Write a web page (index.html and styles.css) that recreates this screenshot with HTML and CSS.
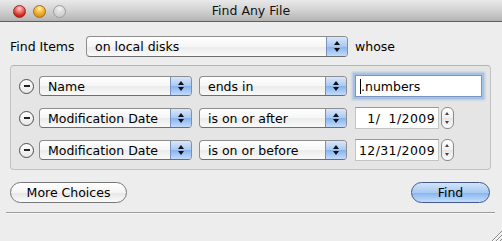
FILE: index.html
```html
<!DOCTYPE html>
<html lang="en">

<head>
  <meta charset="UTF-8" />
  <title>Find Any File</title>
  <link rel="stylesheet" href="styles.css">
</head>

<body>

  <div class="window">
    <!-- Title bar -->
    <div class="titlebar">
      <div class="lights">
        <span class="light red"></span>
        <span class="light yellow"></span>
        <span class="light off"></span>
      </div>
      <div class="title">Find Any File</div>
      <div></div>
    </div>

    <div class="main">
      <div class="find-row">
        <span class="label">Find Items</span>
        <div class="popup popup-where">
          <span class="popup-text">on local disks</span>
          <span class="popup-arrows"></span>
        </div>
        <span class="label">whose</span>
      </div>

      <!-- Search criteria -->
      <div class="criteria">
        <div class="row">
          <span class="minus"></span>
          <div class="popup popup-attr">
            <span class="popup-text">Name</span>
            <span class="popup-arrows"></span>
          </div>
          <div class="popup popup-op">
            <span class="popup-text">ends in</span>
            <span class="popup-arrows"></span>
          </div>
          <div class="textfield"><span class="caret"></span>.numbers</div>
        </div>

        <div class="row">
          <span class="minus"></span>
          <div class="popup popup-attr">
            <span class="popup-text">Modification Date</span>
            <span class="popup-arrows"></span>
          </div>
          <div class="popup popup-op">
            <span class="popup-text">is on or after</span>
            <span class="popup-arrows"></span>
          </div>
          <div class="datefield">1/&#8199;1/2009</div>
          <span class="stepper"></span>
        </div>

        <div class="row">
          <span class="minus"></span>
          <div class="popup popup-attr">
            <span class="popup-text">Modification Date</span>
            <span class="popup-arrows"></span>
          </div>
          <div class="popup popup-op">
            <span class="popup-text">is on or before</span>
            <span class="popup-arrows"></span>
          </div>
          <div class="datefield">12/31/2009</div>
          <span class="stepper"></span>
        </div>
      </div>

      <div class="buttons">
        <button class="btn">More Choices</button>
        <button class="btn btn-default">Find</button>
      </div>
    </div>

    <div class="separator"></div>

    <div class="footer">
      <svg class="grip" width="11" height="11" viewBox="0 0 11 11">
        <path d="M11 1 L1 11 M11 5 L5 11 M11 9 L9 11" stroke="#8c8c8c" stroke-width="1" fill="none" />
        <path d="M11 2 L2 11 M11 6 L6 11" stroke="#ffffff" stroke-width="1" fill="none" />
      </svg>
    </div>
  </div>

</body>

</html>
```

FILE: styles.css
```css
body {
  margin: 0;
  font-family: 'DejaVu Sans', sans-serif;
  font-size: 12.5px;
  color: #000;
  background-color: #ededed;
}

.window {
  width: 502px;
  height: 241px;
  display: flex;
  flex-direction: column;
  background-color: #ededed;
}

/* Title bar */
.titlebar {
  height: 21px;
  display: grid;
  grid-template-columns: 1fr auto 1fr;
  align-items: center;
  background: linear-gradient(#e9e9e9, #d2d2d2 50%, #b4b4b4);
  border-bottom: 1px solid #5e5e5e;
}

.lights {
  display: flex;
  gap: 7px;
  padding-left: 13px;
  padding-top: 1px;
}

.light {
  width: 13px;
  height: 13px;
  border-radius: 50%;
  box-sizing: border-box;
}

.light.red {
  background: radial-gradient(circle at 50% 25%, #fbd3d0 0, #f4827b 30%, #d2231c 70%, #b31710 100%);
  border: 1px solid #9b2a24;
}

.light.yellow {
  background: radial-gradient(circle at 50% 25%, #fff2c8 0, #f9c758 30%, #e49b13 70%, #c97e0c 100%);
  border: 1px solid #a7701c;
}

.light.off {
  background: radial-gradient(circle at 50% 25%, #f4f4f4 0, #dedede 35%, #c3c3c3 100%);
  border: 1px solid #9e9e9e;
}

.title {
  font-size: 12.5px;
  color: #111;
}

/* Main area */
.main {
  padding: 14px 11px 0 10px;
}

.find-row {
  display: flex;
  align-items: center;
  height: 21px;
}

.find-row .label:first-child {
  width: 76px;
}

.find-row .label:last-child {
  margin-left: 7px;
}

.popup {
  display: flex;
  align-items: stretch;
  box-sizing: border-box;
  height: 20px;
  border: 1px solid #8d8d8d;
  border-bottom-color: #6e6e6e;
  border-radius: 4px;
  background: linear-gradient(#ffffff, #f6f6f6 50%, #ebebeb 52%, #fafafa);
  overflow: hidden;
}

.popup-where {
  width: 262px;
  height: 21px;
}

.popup-attr {
  width: 153px;
  margin-left: 5px;
}

.popup-op {
  width: 148px;
  margin-left: 7px;
}

.popup-text {
  flex: 1;
  display: flex;
  align-items: center;
  padding-left: 8px;
  white-space: nowrap;
}

.popup-arrows {
  position: relative;
  width: 20px;
  border-left: 1px solid #7a8fbf;
  background: linear-gradient(#d8e7fb, #a9c8f1 50%, #88b3ee 52%, #c2dcfb);
}

.popup-arrows::before,
.popup-arrows::after {
  content: "";
  position: absolute;
  left: 7px;
  border-left: 3px solid transparent;
  border-right: 3px solid transparent;
}

.popup-arrows::before {
  top: 4px;
  border-bottom: 4px solid #111;
}

.popup-arrows::after {
  bottom: 4px;
  border-top: 4px solid #111;
}

/* Criteria group */
.criteria {
  margin-top: 8px;
  padding: 8px 0 7px 8px;
  border: 1px solid #c2c2c2;
  border-top-color: #b4b4b4;
  border-radius: 4px;
  background-color: #e5e5e5;
  display: flex;
  flex-direction: column;
  gap: 8px;
}

.row {
  display: flex;
  align-items: center;
  height: 24px;
}

.minus {
  position: relative;
  width: 15px;
  height: 15px;
  box-sizing: border-box;
  border: 1px solid #4e4e4e;
  border-radius: 50%;
  background: linear-gradient(#ffffff, #e8e8e8);
}

.minus::before {
  content: "";
  position: absolute;
  left: 3.5px;
  top: 5.5px;
  width: 6px;
  height: 1.5px;
  background-color: #222;
}

.textfield {
  width: 127px;
  height: 22px;
  box-sizing: border-box;
  margin-left: 8px;
  padding-left: 4px;
  display: flex;
  align-items: center;
  background-color: #fff;
  border: 1px solid #7d94be;
  box-shadow: 0 0 0 2px #a3c2ea, 0 0 2px 3px rgba(120, 160, 220, 0.45);
}

.caret {
  width: 1px;
  height: 15px;
  background-color: #000;
}

.datefield {
  width: 84px;
  height: 22px;
  box-sizing: border-box;
  margin-left: 8px;
  padding-right: 3px;
  display: flex;
  align-items: center;
  justify-content: flex-end;
  white-space: pre;
  letter-spacing: 0.4px;
  background-color: #fff;
  border: 1px solid #c4c4c4;
  border-top-color: #9a9a9a;
}

.stepper {
  position: relative;
  width: 13px;
  height: 22px;
  box-sizing: border-box;
  margin-left: 2px;
  border: 1px solid #8a8a8a;
  border-radius: 6px;
  background: linear-gradient(#ffffff, #f0f0f0 50%, #e6e6e6 52%, #fbfbfb);
}

.stepper::before,
.stepper::after {
  content: "";
  position: absolute;
  left: 3px;
  border-left: 2.5px solid transparent;
  border-right: 2.5px solid transparent;
}

.stepper::before {
  top: 4px;
  border-bottom: 3px solid #444;
}

.stepper::after {
  bottom: 4px;
  border-top: 3px solid #444;
}

/* Buttons */
.buttons {
  display: flex;
  justify-content: space-between;
  margin-top: 12px;
  padding-right: 1px;
}

.btn {
  height: 21px;
  padding: 0;
  font-family: inherit;
  font-size: 12.5px;
  color: #000;
  border: 1px solid #777;
  border-radius: 11px;
  background: linear-gradient(#ffffff, #f4f4f4 50%, #e6e6e6 52%, #fbfbfb);
  width: 117px;
}

.btn-default {
  width: 79px;
  border-color: #45598f;
  background: linear-gradient(#d3e4fb, #a8c9f2 50%, #87b4ef 52%, #c4defc);
}

.separator {
  margin: 9px 7px 0 6px;
  height: 1px;
  background-color: #9b9b9b;
  border-bottom: 1px solid #f8f8f8;
}

.footer {
  flex: 1;
  display: flex;
  justify-content: flex-end;
  align-items: flex-end;
}

.grip {
  display: block;
}
```
